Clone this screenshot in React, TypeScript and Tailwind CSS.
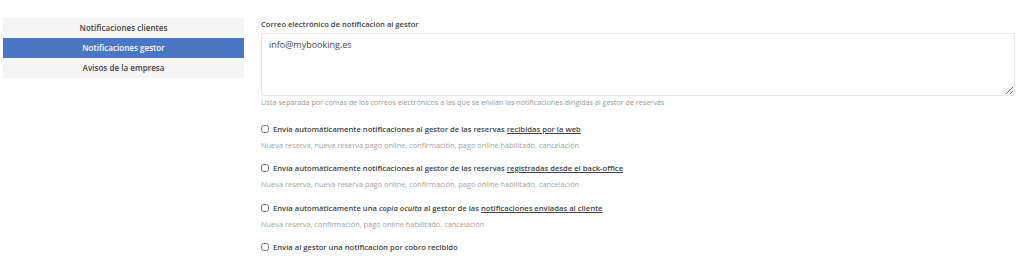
import { useState } from 'react'

const tabs = ['Notificaciones clientes', 'Notificaciones gestor', 'Avisos de la empresa']

const checks = [
  {
    label: (
      <>
        Envía automáticamente notificaciones al gestor de las reservas{' '}
        <span className="underline">recibidas por la web</span>
      </>
    ),
    help: 'Nueva reserva, nueva reserva pago online, confirmación, pago online habilitado, cancelación',
  },
  {
    label: (
      <>
        Envía automáticamente notificaciones al gestor de las reservas{' '}
        <span className="underline">registradas desde el back-office</span>
      </>
    ),
    help: 'Nueva reserva, nueva reserva pago online, confirmación, pago online habilitado, cancelación',
  },
  {
    label: (
      <>
        Envía automáticamente una <em>copia oculta</em> al gestor de las{' '}
        <span className="underline">notificaciones enviadas al cliente</span>
      </>
    ),
    help: 'Nueva reserva, confirmación, pago online habilitado, cancelación',
  },
  {
    label: <>Envía al gestor una notificación por cobro recibido</>,
    help: '',
  },
]

export default function App() {
  const [active, setActive] = useState(1)

  return (
    <div className="flex h-[258px] overflow-hidden bg-white pl-[3px] pt-[18px] font-['Open_Sans',sans-serif] text-[#444]">
      <div className="flex w-[241px] shrink-0 flex-col self-start">
        {tabs.map((t, i) => (
          <button
            key={t}
            onClick={() => setActive(i)}
            className={
              i === active
                ? 'h-[20px] bg-[#4a76c4] text-[8.1px] font-semibold text-white'
                : 'h-[20px] bg-[#f5f5f5] text-[8.1px] font-semibold text-[#444]'
            }
          >
            {t}
          </button>
        ))}
      </div>

      <div className="ml-[17px] flex flex-1 flex-col pr-[9px]">
        <label className="text-[7.6px] font-semibold leading-[12px] text-[#444]">
          Correo electrónico de notificación al gestor
        </label>
        <textarea
          defaultValue="info@mybooking.es"
          className="mt-[3px] h-[67px] w-full resize-y rounded-[2px] border border-[#e6e6e6] px-[7px] py-[4px] text-[9px] leading-[13px] text-[#444] outline-none"
        />
        <p className="mt-[1px] text-[7.2px] leading-[10px] text-[#999]">
          Lista separada por comas de los correos electrónicos a las que se envían las notificaciones dirigidas al gestor de reservas
        </p>

        <div className="mt-[17px] flex flex-col gap-[13.5px]">
          {checks.map((c, i) => (
            <div key={i} className="flex flex-col">
              <label className="flex items-center gap-[4px] text-[7.65px] font-semibold leading-[10px] text-[#444]">
                <input type="checkbox" className="h-[8px] w-[8px] accent-[#4a76c4]" />
                <span>{c.label}</span>
              </label>
              <p className="mt-[6px] text-[7.4px] leading-[10px] text-[#a3a3a3]">{c.help}</p>
            </div>
          ))}
        </div>
      </div>
    </div>
  )
}
